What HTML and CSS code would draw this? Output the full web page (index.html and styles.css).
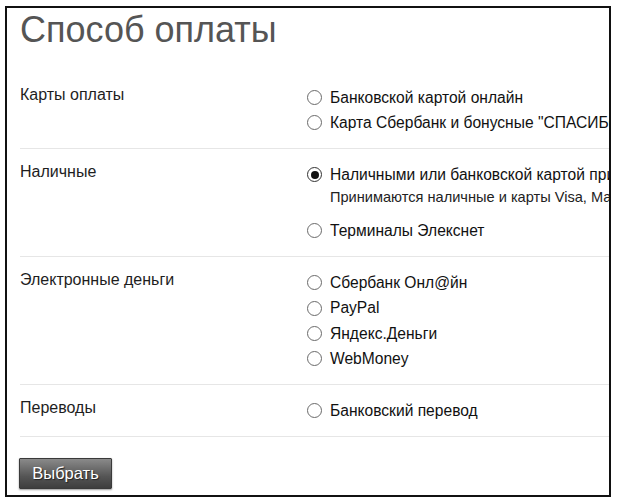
FILE: index.html
```html
<!DOCTYPE html>
<html lang="ru">
<head>
<meta charset="utf-8">
<title>Способ оплаты</title>
<link rel="stylesheet" href="styles.css">
</head>
<body>
<div class="frame">
  <h1 class="title">Способ оплаты</h1>

  <div class="group">
    <div class="label">Карты оплаты</div>
    <div class="options">
      <div class="option"><span class="radio"></span>Банковской картой онлайн</div>
      <div class="option"><span class="radio"></span>Карта Сбербанк и бонусные "СПАСИБО от Сбербанка"</div>
    </div>
  </div>

  <div class="group">
    <div class="label">Наличные</div>
    <div class="options">
      <div class="option"><span class="radio checked"></span>Наличными или банковской картой при получении</div>
      <div class="note">Принимаются наличные и карты Visa, MasterCard</div>
      <div class="option"><span class="radio"></span>Терминалы Элекснет</div>
    </div>
  </div>

  <div class="group">
    <div class="label">Электронные деньги</div>
    <div class="options">
      <div class="option"><span class="radio"></span>Сбербанк Онл@йн</div>
      <div class="option"><span class="radio"></span>PayPal</div>
      <div class="option"><span class="radio"></span>Яндекс.Деньги</div>
      <div class="option"><span class="radio"></span>WebMoney</div>
    </div>
  </div>

  <div class="group">
    <div class="label">Переводы</div>
    <div class="options">
      <div class="option"><span class="radio"></span>Банковский перевод</div>
    </div>
  </div>

  <div class="actions">
    <button class="btn" type="button">Выбрать</button>
  </div>
</div>
</body>
</html>
```

FILE: styles.css
```css
html, body {
  margin: 0;
  padding: 0;
  background: #fff;
}

body {
  font-family: "Liberation Sans", Arial, sans-serif;
  color: #1e1e1e;
}

.frame {
  box-sizing: border-box;
  width: 606px;
  height: 491px;
  margin: 6px 0 0 5px;
  border: 2px solid #111;
  padding: 0 0 0 13px;
  overflow: hidden;
}

.title {
  margin: 1px 0 22px 0;
  font-size: 36px;
  line-height: 41px;
  font-weight: normal;
  color: #555;
  white-space: nowrap;
}

.group {
  display: flex;
  padding: 13px 0;
  border-bottom: 1px solid #e6e6e6;
}

.group:last-of-type {
  padding-bottom: 14px;
}

.label {
  flex: 0 0 287px;
  font-size: 16px;
  line-height: 20px;
  color: #1e1e1e;
}

.options {
  flex: 1 1 auto;
  min-width: 0;
  white-space: nowrap;
  font-size: 15.6px;
}

.option {
  display: flex;
  align-items: center;
  height: 25.1px;
  line-height: 25.1px;
  color: #111;
}

.radio {
  box-sizing: border-box;
  flex: 0 0 auto;
  width: 15px;
  height: 15px;
  margin: 0 8px 0 0;
  border: 1px solid #6a6a6a;
  border-radius: 50%;
  background: #fff;
  position: relative;
}

.radio.checked {
  border-color: #333;
}

.radio.checked::after {
  content: "";
  position: absolute;
  left: 2.5px;
  top: 2.5px;
  width: 8px;
  height: 8px;
  border-radius: 50%;
  background: #111;
}

.note {
  padding-left: 23px;
  line-height: 20px;
  font-size: 14.6px;
  color: #222;
  margin-bottom: 11px;
}

.actions {
  padding-top: 21px;
}

.btn {
  box-sizing: border-box;
  width: 93px;
  height: 31px;
  margin-left: -1px;
  padding: 0;
  border: 1px solid #3a3a3a;
  border-radius: 1px;
  background: linear-gradient(#8a8a8a, #555 60%, #3e3e3e);
  color: #fff;
  font-family: "Liberation Sans", Arial, sans-serif;
  font-size: 16.5px;
  text-shadow: 1px 1px 1px #222;
  box-shadow: 0 1px 2px rgba(0,0,0,0.4);
}
```
